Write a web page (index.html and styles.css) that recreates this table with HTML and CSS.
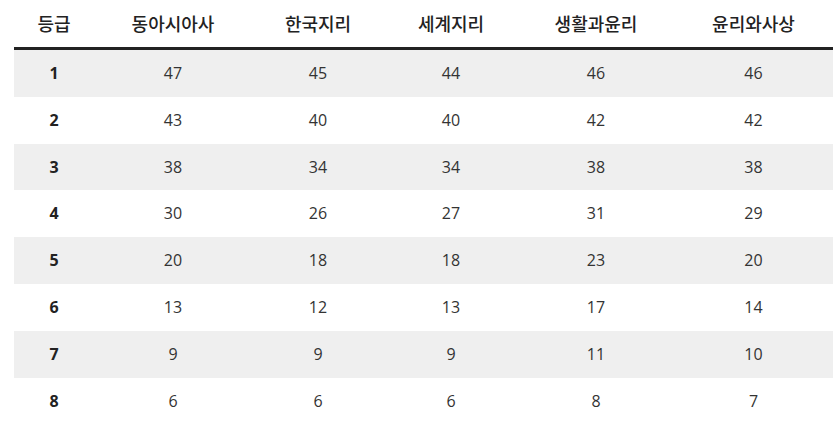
FILE: index.html
```html
<!DOCTYPE html>
<html lang="ko">
<head>
<meta charset="utf-8">
<link rel="stylesheet" href="styles.css">
</head>
<body>
<table class="grade-table">
  <colgroup>
    <col class="c1"><col class="c2"><col class="c3"><col class="c4"><col class="c5"><col class="c6">
  </colgroup>
  <thead>
    <tr><th>등급</th><th>동아시아사</th><th>한국지리</th><th>세계지리</th><th>생활과윤리</th><th>윤리와사상</th></tr>
  </thead>
  <tbody>
    <tr><th>1</th><td>47</td><td>45</td><td>44</td><td>46</td><td>46</td></tr>
    <tr><th>2</th><td>43</td><td>40</td><td>40</td><td>42</td><td>42</td></tr>
    <tr><th>3</th><td>38</td><td>34</td><td>34</td><td>38</td><td>38</td></tr>
    <tr><th>4</th><td>30</td><td>26</td><td>27</td><td>31</td><td>29</td></tr>
    <tr><th>5</th><td>20</td><td>18</td><td>18</td><td>23</td><td>20</td></tr>
    <tr><th>6</th><td>13</td><td>12</td><td>13</td><td>17</td><td>14</td></tr>
    <tr><th>7</th><td>9</td><td>9</td><td>9</td><td>11</td><td>10</td></tr>
    <tr><th>8</th><td>6</td><td>6</td><td>6</td><td>8</td><td>7</td></tr>
  </tbody>
</table>
</body>
</html>
```
FILE: styles.css
```css
html, body {
  margin: 0;
  padding: 0;
  background: #fff;
}
body {
  padding: 0 6px 0 14px;
  font-family: "Open Sans", "Noto Sans CJK KR", sans-serif;
  font-size: 16px;
  color: #333;
}
.grade-table {
  width: 819px;
  border-collapse: collapse;
  table-layout: fixed;
}
.c1 { width: 80px; }
.c2 { width: 158px; }
.c3 { width: 132px; }
.c4 { width: 134px; }
.c5 { width: 156px; }
.c6 { width: 159px; }
.grade-table th,
.grade-table td {
  text-align: center;
  padding: 13px 0;
  line-height: 20.8px;
  vertical-align: middle;
}
.grade-table thead th {
  font-family: "Noto Sans CJK KR", sans-serif;
  font-size: 18px;
  font-weight: 500;
  color: #222;
  padding: 0;
  height: 47px;
  border-bottom: 3px solid #222;
}
.grade-table tbody th {
  font-weight: 700;
  color: #222;
}
.grade-table tbody tr:nth-child(odd) {
  background: #efefef;
}
```
